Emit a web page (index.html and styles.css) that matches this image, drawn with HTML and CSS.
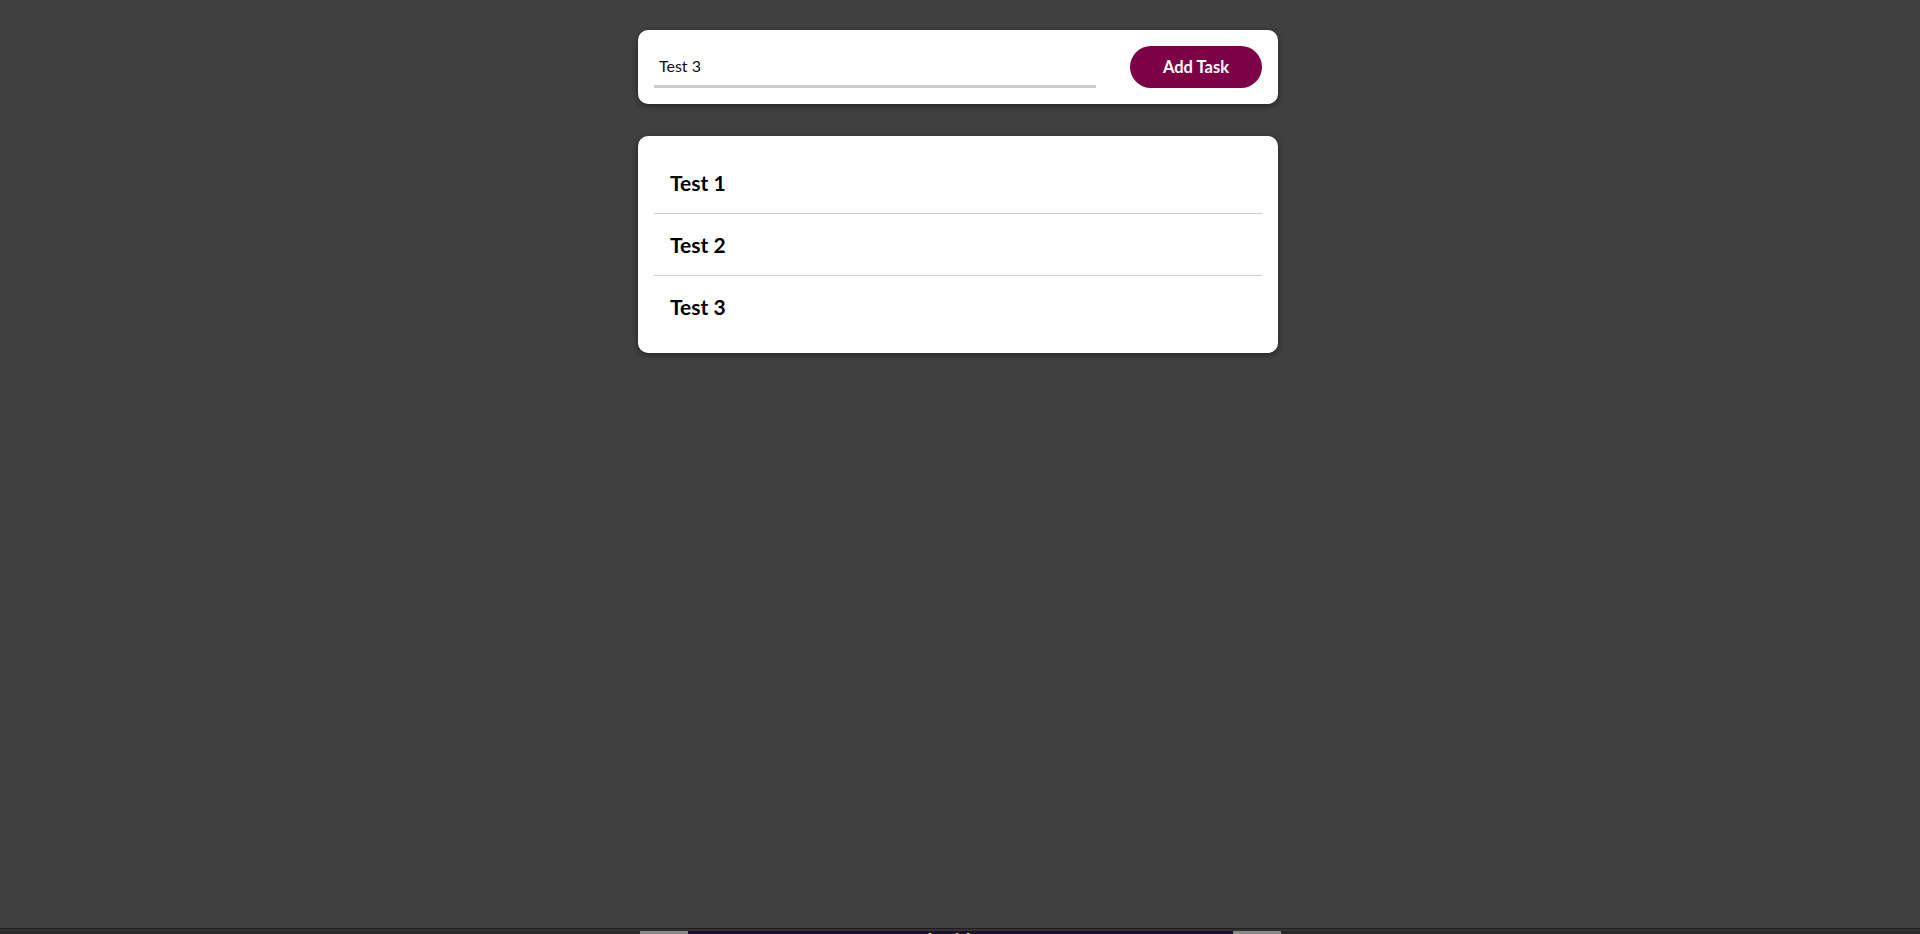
FILE: index.html
```html
<!DOCTYPE html>
<html lang="en">
<head>
<meta charset="utf-8">
<title>Tasks</title>
<link rel="stylesheet" href="styles.css">
</head>
<body>
<div class="page">
  <main class="app">
    <form class="card add-form" onsubmit="return false">
      <input class="task-input" type="text" value="Test 3">
      <button class="add-btn" type="submit">Add Task</button>
    </form>
    <ul class="card task-list">
      <li class="task">Test 1</li>
      <li class="task">Test 2</li>
      <li class="task">Test 3</li>
    </ul>
  </main>
  <footer class="footer">
    <div class="footer-line"></div>
    <div class="footer-bar">
      <div class="footer-side"></div>
      <div class="footer-center"><span class="footer-text">lalla</span></div>
      <div class="footer-side"></div>
    </div>
  </footer>
</div>
</body>
</html>
```

FILE: styles.css
```css
* { box-sizing: border-box; }
html, body { margin: 0; padding: 0; }
body {
  background: #404040;
  font-family: Lato, "Noto Sans", "Liberation Sans", sans-serif;
  color: #000;
}
.page {
  height: 100vh;
  display: flex;
  flex-direction: column;
  overflow: hidden;
}
.app {
  flex: 1;
  width: 640px;
  margin: 0 auto;
  padding-top: 30px;
  display: flex;
  flex-direction: column;
  gap: 32px;
  position: relative;
  left: -2px;
}
.card {
  background: #fff;
  border-radius: 10px;
  box-shadow: 0 2px 6px rgba(0,0,0,0.45);
}
.add-form {
  margin: 0;
  height: 74px;
  padding: 16px;
  display: flex;
  align-items: center;
  gap: 34px;
}
.task-input {
  width: 442px;
  height: 42px;
  border: none;
  border-bottom: 3px solid #cccccc;
  outline: none;
  font-family: inherit;
  font-size: 16px;
  color: #111;
  padding: 0 4px 0 5px;
  background: transparent;
}
.add-btn {
  flex: 1;
  height: 42px;
  border: none;
  border-radius: 21px;
  background: #7b0045;
  color: #fff;
  font-family: inherit;
  font-weight: 700;
  font-size: 16.5px;
  padding: 0 16px;
}
.task-list {
  list-style: none;
  margin: 0;
  padding: 16px;
}
.task {
  height: 62px;
  padding: 0 16px;
  display: flex;
  align-items: center;
  font-size: 21px;
  font-weight: 700;
  border-bottom: 1px solid #cccccc;
}
.task:last-child {
  border-bottom: none;
  height: 61px;
}
.footer {
  flex: 0 0 6px;
  overflow: hidden;
  background: #333;
}
.footer-line {
  height: 1px;
  background: #1e1e1e;
}
.footer-bar {
  margin-top: 2px;
  height: 20px;
  background: #2a2a2a;
  display: flex;
  justify-content: center;
}
.footer-side {
  width: 48px;
  background: #8a8a8a;
}
.footer-center {
  width: 545px;
  background: #1e0f33;
  display: flex;
  justify-content: center;
}
.footer-text {
  color: #e6e07a;
  font-size: 20px;
  font-weight: 700;
  line-height: 20px;
  letter-spacing: 6px;
}
```
